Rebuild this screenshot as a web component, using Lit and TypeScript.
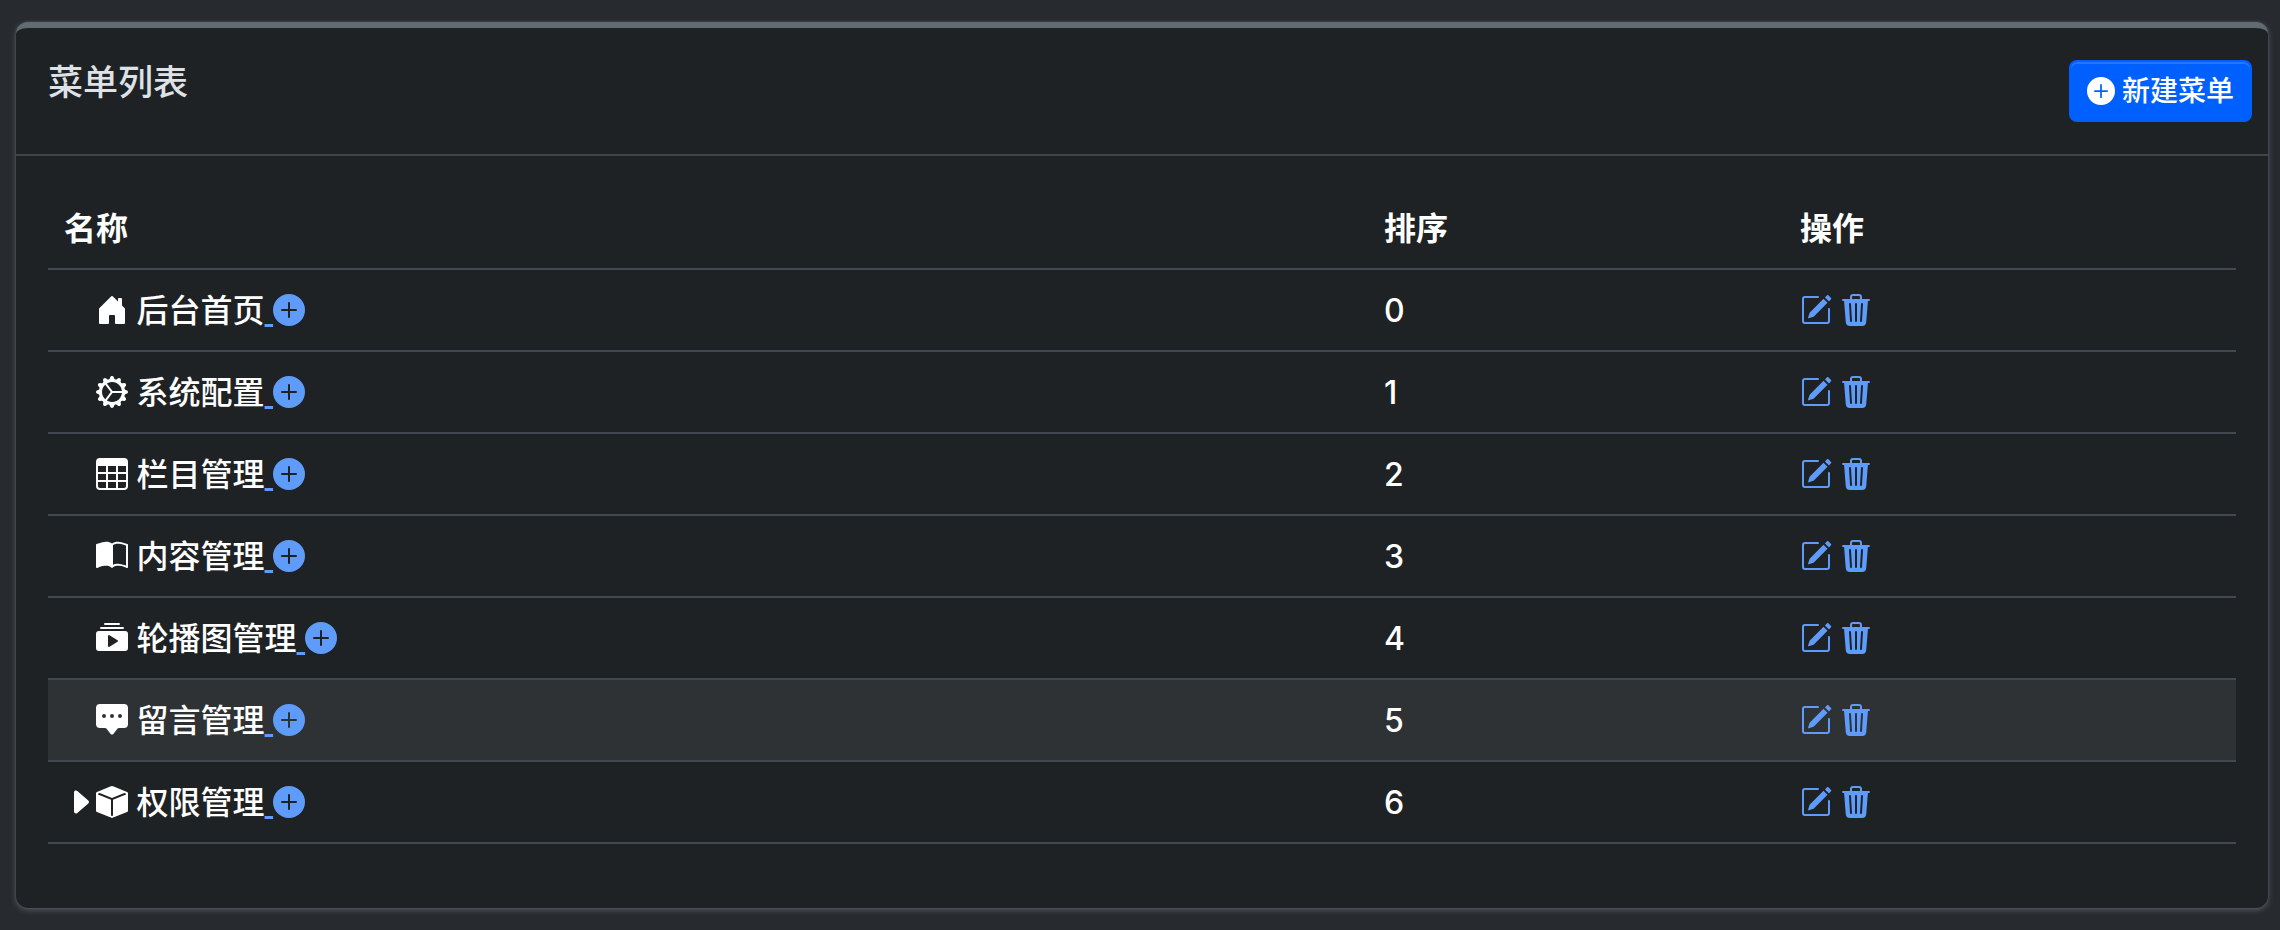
import { LitElement, html, css, svg } from "lit";
import { customElement } from "lit/decorators.js";

const ICONS: Record<string, string[]> = {
  home: ["M6.5 14.5v-3.505c0-.245.25-.495.5-.495h2c.25 0 .5.25.5.5v3.5a.5.5 0 0 0 .5.5h4a.5.5 0 0 0 .5-.5v-7a.5.5 0 0 0-.146-.354L13 5.793V2.5a.5.5 0 0 0-.5-.5h-1a.5.5 0 0 0-.5.5v1.293L8.354 1.146a.5.5 0 0 0-.708 0l-6 6A.5.5 0 0 0 1.5 7.5v7a.5.5 0 0 0 .5.5h4a.5.5 0 0 0 .5-.5"],
  gear: ["M7.068.727c.243-.97 1.62-.97 1.864 0l.071.286a.96.96 0 0 0 1.622.434l.205-.211c.695-.719 1.888-.03 1.613.931l-.08.284a.96.96 0 0 0 1.187 1.187l.283-.081c.96-.275 1.65.918.931 1.613l-.211.205a.96.96 0 0 0 .434 1.622l.286.071c.97.243.97 1.62 0 1.864l-.286.071a.96.96 0 0 0-.434 1.622l.211.205c.719.695.03 1.888-.931 1.613l-.284-.08a.96.96 0 0 0-1.187 1.187l.081.283c.275.96-.918 1.65-1.613.931l-.205-.211a.96.96 0 0 0-1.622.434l-.071.286c-.243.97-1.62.97-1.864 0l-.071-.286a.96.96 0 0 0-1.622-.434l-.205.211c-.695.719-1.888.03-1.613-.931l.08-.284a.96.96 0 0 0-1.186-1.187l-.284.081c-.96.275-1.65-.918-.931-1.613l.211-.205a.96.96 0 0 0-.434-1.622l-.286-.071c-.97-.243-.97-1.62 0-1.864l.286-.071a.96.96 0 0 0 .434-1.622l-.211-.205c-.719-.695-.03-1.888.931-1.613l.284.08a.96.96 0 0 0 1.187-1.186l-.081-.284c-.275-.96.918-1.65 1.613-.931l.205.211a.96.96 0 0 0 1.622-.434zM12.973 8.5H8.25l-2.834 3.779A4.998 4.998 0 0 0 12.973 8.5m0-1a4.998 4.998 0 0 0-7.557-3.779l2.834 3.78zM5.048 3.967l-.087.065zm-.431.355A4.98 4.98 0 0 0 3.002 8c0 1.455.622 2.765 1.615 3.678L7.375 8zm.344 7.646.087.065z"],
  table: ["M0 2a2 2 0 0 1 2-2h12a2 2 0 0 1 2 2v12a2 2 0 0 1-2 2H2a2 2 0 0 1-2-2zm15 2h-4v3h4zm0 4h-4v3h4zm0 4h-4v3h3a1 1 0 0 0 1-1zm-5 3v-3H6v3zm-5 0v-3H1v2a1 1 0 0 0 1 1zm-4-4h4V8H1zm0-4h4V4H1zm5-3v3h4V4zm4 4H6v3h4z"],
  book: ["M8.5 2.687c.654-.689 1.782-.886 3.112-.752 1.234.124 2.503.523 3.388.893v9.923c-.918-.35-2.107-.692-3.287-.81-1.094-.111-2.278-.039-3.213.492zM8 1.783C7.015.936 5.587.81 4.287.94c-1.514.153-3.042.672-3.994 1.105A.5.5 0 0 0 0 2.5v11a.5.5 0 0 0 .707.455c.882-.4 2.303-.881 3.68-1.02 1.409-.142 2.59.087 3.223.877a.5.5 0 0 0 .78 0c.633-.79 1.814-1.019 3.222-.877 1.378.139 2.8.62 3.681 1.02A.5.5 0 0 0 16 13.5v-11a.5.5 0 0 0-.293-.455c-.952-.433-2.48-.952-3.994-1.105C10.413.809 8.985.936 8 1.783"],
  play: ["M2.5 3.5a.5.5 0 0 1 0-1h11a.5.5 0 0 1 0 1zm2-2a.5.5 0 0 1 0-1h7a.5.5 0 0 1 0 1zM0 13a1.5 1.5 0 0 0 1.5 1.5h13A1.5 1.5 0 0 0 16 13V6a1.5 1.5 0 0 0-1.5-1.5h-13A1.5 1.5 0 0 0 0 6zm6.258-6.437a.5.5 0 0 1 .507.013l4 2.5a.5.5 0 0 1 0 .848l-4 2.5A.5.5 0 0 1 6 12V7a.5.5 0 0 1 .258-.437"],
  chat: ["M0 2a2 2 0 0 1 2-2h12a2 2 0 0 1 2 2v8a2 2 0 0 1-2 2h-2.5a1 1 0 0 0-.8.4l-1.9 2.533a1 1 0 0 1-1.6 0L5.3 12.4a1 1 0 0 0-.8-.4H2a2 2 0 0 1-2-2zm5 4a1 1 0 1 0-2 0 1 1 0 0 0 2 0m4 0a1 1 0 1 0-2 0 1 1 0 0 0 2 0m3 1a1 1 0 1 0 0-2 1 1 0 0 0 0 2"],
  box: ["M15.528 2.973a.75.75 0 0 1 .472.696v8.662a.75.75 0 0 1-.472.696l-7.25 2.9a.75.75 0 0 1-.557 0l-7.25-2.9A.75.75 0 0 1 0 12.331V3.669a.75.75 0 0 1 .471-.696L7.443.184l.004-.001.274-.11a.75.75 0 0 1 .558 0l.274.11.004.001zm-1.374.527L8 5.962 1.846 3.5 1 3.839v.4l6.5 2.6v7.922l.5.2.5-.2V6.84l6.5-2.6v-.4l-.846-.339Z"],
  caret: ["m12.14 8.753-5.482 4.796c-.646.566-1.658.106-1.658-.753V3.204a1 1 0 0 1 1.659-.753l5.48 4.796a1 1 0 0 1 0 1.506z"],
  plus: ["M16 8A8 8 0 1 1 0 8a8 8 0 0 1 16 0M8.5 4.5a.5.5 0 0 0-1 0v3h-3a.5.5 0 0 0 0 1h3v3a.5.5 0 0 0 1 0v-3h3a.5.5 0 0 0 0-1h-3z"],
  edit: [
    "M15.502 1.94a.5.5 0 0 1 0 .706L14.459 3.69l-2-2L13.502.646a.5.5 0 0 1 .707 0l1.293 1.293zm-1.75 2.456-2-2L4.939 9.21a.5.5 0 0 0-.121.196l-.805 2.414a.25.25 0 0 0 .316.316l2.414-.805a.5.5 0 0 0 .196-.12z",
    "M1 13.5A1.5 1.5 0 0 0 2.5 15h11a1.5 1.5 0 0 0 1.5-1.5v-6a.5.5 0 0 0-1 0v6a.5.5 0 0 1-.5.5h-11a.5.5 0 0 1-.5-.5v-11a.5.5 0 0 1 .5-.5H9a.5.5 0 0 0 0-1H2.5A1.5 1.5 0 0 0 1 2.5z",
  ],
  trash: ["M11 1.5v1h3.5a.5.5 0 0 1 0 1h-.538l-.853 10.66A2 2 0 0 1 11.115 16h-6.23a2 2 0 0 1-1.994-1.84L2.038 3.5H1.5a.5.5 0 0 1 0-1H5v-1A1.5 1.5 0 0 1 6.5 0h3A1.5 1.5 0 0 1 11 1.5m-5 0v1h4v-1a.5.5 0 0 0-.5-.5h-3a.5.5 0 0 0-.5.5M4.5 5.029l.5 8.5a.5.5 0 1 0 .998-.06l-.5-8.5a.5.5 0 1 0-.998.06m6.53-.528a.5.5 0 0 0-.528.47l-.5 8.5a.5.5 0 0 0 .998.058l.5-8.5a.5.5 0 0 0-.47-.528M8 4.5a.5.5 0 0 0-.5.5v8.5a.5.5 0 0 0 1 0V5a.5.5 0 0 0-.5-.5"],
};

const icon = (name: string) => html`<svg class="icon" viewBox="0 0 16 16" fill="currentColor" fill-rule="evenodd" aria-hidden="true">${ICONS[name].map((d) => svg`<path d=${d}></path>`)}</svg>`;

interface MenuItem {
  name: string;
  icon: string;
  sort: number;
  active?: boolean;
  expandable?: boolean;
}

@customElement("app-root")
export class AppRoot extends LitElement {
  static styles = css`
    :host {
      display: block;
      box-sizing: border-box;
      min-height: 100vh;
      padding: 22px 12px 22px 16px;
      background: #272a2f;
      color: #fff;
      font: 500 32px/48px Inter, "Noto Sans CJK SC", sans-serif;
    }
    .card {
      border-top: 6px solid #616c72;
      border-radius: 12px;
      background: #1e2224;
      box-shadow: 0 0 2px rgba(222, 226, 230, 0.2), 0 2px 6px rgba(222, 226, 230, 0.25);
    }
    .header {
      display: flex;
      justify-content: space-between;
      align-items: flex-start;
      padding: 32px 16px 32px 32px;
      border-bottom: 2px solid #414548;
    }
    .title {
      margin: 0;
      font-size: 35px;
      font-weight: 500;
      line-height: 44px;
      color: #dee2e6;
    }
    .create {
      padding: 8px 16px;
      border: 2px solid #0060ff;
      border-radius: 8px;
      background: #0060ff;
      box-shadow: inset 0 2px 0 rgba(255, 255, 255, 0.15);
      color: #fff;
      font: inherit;
      font-size: 28px;
      line-height: 42px;
      cursor: pointer;
    }
    .body {
      padding: 32px;
    }
    table {
      width: 100%;
      margin-bottom: 32px;
      border-collapse: separate;
      border-spacing: 0;
      table-layout: fixed;
    }
    .col-name {
      width: 60.33%;
    }
    .col-sort {
      width: 19.01%;
    }
    th,
    td {
      padding: 17px 16px 15px;
      border-bottom: 2px solid #42484f;
      text-align: left;
      white-space: nowrap;
    }
    th {
      font-weight: 700;
    }
    .name {
      padding-left: 48px;
    }
    .name.expandable {
      padding-left: 16px;
    }
    tr.active td,
    tbody tr:hover td {
      background: #2f3235;
    }
    .icon {
      display: inline-block;
      width: 1em;
      height: 1em;
      vertical-align: -0.125em;
    }
    .toggle {
      padding: 0;
      border: 0;
      background: none;
      color: inherit;
      font: inherit;
      cursor: pointer;
    }
    a {
      color: #5f9cfa;
      text-decoration: underline;
    }
  `;

  private items: MenuItem[] = [
    { name: "后台首页", icon: "home", sort: 0 },
    { name: "系统配置", icon: "gear", sort: 1 },
    { name: "栏目管理", icon: "table", sort: 2 },
    { name: "内容管理", icon: "book", sort: 3 },
    { name: "轮播图管理", icon: "play", sort: 4 },
    { name: "留言管理", icon: "chat", sort: 5, active: true },
    { name: "权限管理", icon: "box", sort: 6, expandable: true },
  ];

  private row(item: MenuItem) {
    const toggle = item.expandable
      ? html`<button class="toggle" type="button" aria-label="展开">${icon("caret")}</button>`
      : "";
    return html`<tr class=${item.active ? "active" : ""}>
      <td class="name ${item.expandable ? "expandable" : ""}">${toggle}${icon(item.icon)} ${item.name}<a href="#add" aria-label="新建">&#32;${icon("plus")}</a></td>
      <td>${item.sort}</td>
      <td><a href="#edit" aria-label="编辑">${icon("edit")}</a> <a href="#delete" aria-label="删除">${icon("trash")}</a></td>
    </tr>`;
  }

  render() {
    return html`<main class="card" lang="zh-CN">
      <header class="header">
        <h3 class="title">菜单列表</h3>
        <button class="create" type="button">${icon("plus")} 新建菜单</button>
      </header>
      <div class="body">
        <table>
          <colgroup>
            <col class="col-name" />
            <col class="col-sort" />
            <col />
          </colgroup>
          <thead>
            <tr>
              <th scope="col">名称</th>
              <th scope="col">排序</th>
              <th scope="col">操作</th>
            </tr>
          </thead>
          <tbody>
            ${this.items.map((item) => this.row(item))}
          </tbody>
        </table>
      </div>
    </main>`;
  }
}
